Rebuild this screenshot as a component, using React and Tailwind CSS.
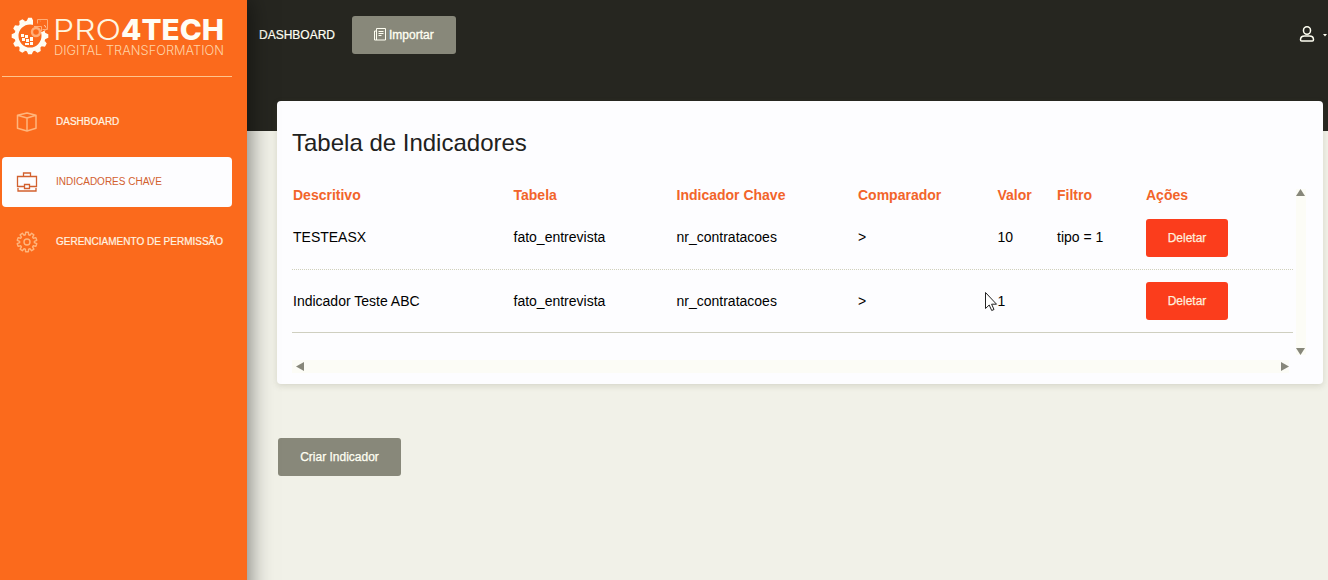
import React from "react";

function BoxIcon() {
  return (
    <svg width="22" height="20" viewBox="0 0 22 20" fill="none" stroke="currentColor" strokeWidth="1.5" strokeLinejoin="round">
      <path d="M1.500 3.200 11 .9l9 2.300v13L11 19l-9.500-2.800zM1.500 3.200 11 6l9-2.800M11 6v13" />
    </svg>
  );
}

function BriefcaseIcon() {
  return (
    <svg width="22" height="20" viewBox="0 0 22 20" fill="none" stroke="currentColor" strokeWidth="1.300">
      <path d="M7.500 4.500v-3.500h7v3.500M8.500 14.500h-7v-10h19v10h-7M8.500 12.500h5v4h-5zM2 16v3h18v-3" />
    </svg>
  );
}

const gearPath = (() => {
  const n = 10;
  const pts = [];
  for (let i = 0; i < n; i++) {
    const c = (i * 2 * Math.PI) / n;
    [[-0.22, 7.4], [-0.14, 9.9], [0.14, 9.9], [0.22, 7.4]].forEach(([o, r]) => {
      pts.push(`${(11 + r * Math.sin(c + o)).toFixed(2)} ${(11 - r * Math.cos(c + o)).toFixed(2)}`);
    });
  }
  return "M" + pts.join("L") + "z";
})();

function GearIcon() {
  return (
    <svg width="22" height="22" viewBox="0 0 22 22" fill="none" stroke="currentColor" strokeWidth="1.400" strokeLinejoin="round">
      <path d={gearPath} />
      <circle cx="11" cy="11" r="3" />
    </svg>
  );
}

const teeth = [0, 30, 60, 90, 120, 150, 180, 210, 240, 270, 300, 330];

function Brand() {
  return (
    <div className="h-[77px] w-[230px] border-b border-[#ffc48c] pl-[9px] pt-[14px]">
      <svg className="block" width="216" height="46" viewBox="0 0 216 46">
        <g fill="#fffdf4">
          {teeth.map((a) => (
            <path key={a} d="M15.700 7l1.500-3.300h3.600l1.500 3.300z" transform={`rotate(${a} 19 22)`} />
          ))}
        </g>
        <circle cx="19" cy="22" r="13.500" fill="none" stroke="#fffdf4" strokeWidth="4" />
        <path d="M22 19V6l5-2 9 11-5 3z" fill="#fb6a1c" />
        <path fill="#fffdf4" d="M10 20h3v3h-3zM14 21h3v3h-3zM11 24h3v3h-3zM15 25h3v3h-3zM19 23h3v4h-3zM14 29h4v2h-4zM19 28h3v3h-3z" />
        <g fill="none" stroke="#ffae78">
          <path d="M26.500 9.500v-4h10v10h-5" />
          <circle cx="25" cy="18" r="4" strokeWidth="2.400" />
          <path d="M23 12.500h7.500v5" />
        </g>
        <g fontFamily="Inter, 'Liberation Sans', sans-serif">
          <text x="42" y="26" fontSize="29" fontWeight="300" fill="#fff6e0" textLength="68" lengthAdjust="spacingAndGlyphs">PRO</text>
          <text x="110" y="26" fontSize="29" fontWeight="800" fill="#fffdf4" textLength="103" lengthAdjust="spacingAndGlyphs">4TECH</text>
          <text x="43" y="40.500" fontSize="12.500" fontWeight="300" fill="#ffd2a4" textLength="170" lengthAdjust="spacingAndGlyphs">DIGITAL TRANSFORMATION</text>
        </g>
      </svg>
    </div>
  );
}

function NavItem({ icon, label, active }) {
  return (
    <a
      className={
        "flex h-[50px] w-[230px] items-center rounded pl-[14px] text-[10px] leading-none " +
        (active ? "bg-[#fdfdff] text-[#d2602e]" : "text-[#fff4e2] [-webkit-text-stroke:0.2px_currentColor]")
      }
    >
      <span className={"flex w-10 shrink-0 " + (active ? "text-[#d2602e]" : "text-[#ffb57c]")}>{icon}</span>
      <span className="whitespace-nowrap">{label}</span>
    </a>
  );
}

const columns = "grid grid-cols-[220.500px_163px_181.500px_139.500px_59.500px_89px_1fr] pl-px";

const rows = [
  ["TESTEASX", "fato_entrevista", "nr_contratacoes", ">", "10", "tipo = 1"],
  ["Indicador Teste ABC", "fato_entrevista", "nr_contratacoes", ">", "1", ""],
];

function Arrow({ d, w, h }) {
  return (
    <svg className="block" width={w} height={h} viewBox={`0 0 ${w} ${h}`} fill="#87877a">
      <path d={d} />
    </svg>
  );
}

export default function App() {
  return (
    <div className="relative flex h-[580px] w-[1328px] overflow-hidden bg-[#f1f1e8] font-['Liberation_Sans',Arial,sans-serif]">
      <aside className="z-10 flex h-[640px] w-[247px] shrink-0 flex-col bg-[#fb6a1c] pl-[2px] shadow-[2px_0_22px_0_rgba(0,0,0,0.5)]">
        <Brand />
        <nav className="mt-5 flex flex-col gap-[10px]">
          <NavItem icon={<BoxIcon />} label="DASHBOARD" />
          <NavItem icon={<BriefcaseIcon />} label="INDICADORES CHAVE" active />
          <NavItem icon={<GearIcon />} label="GERENCIAMENTO DE PERMISSÃO" />
        </nav>
      </aside>

      <main className="flex min-w-0 flex-1 flex-col">
        <header className="flex h-[131px] shrink-0 items-start bg-[#262620] pl-3 pt-4 text-xs text-[#fffff2]">
          <span className="flex h-[38px] w-[93px] items-center [-webkit-text-stroke:0.2px_currentColor]">DASHBOARD</span>
          <button className="flex h-[38px] w-[104px] items-center rounded-[3px] bg-[#88887a] pl-[22px]">
            <svg className="-mt-[2px]" width="12" height="13" viewBox="0 0 12 13" fill="none" stroke="currentColor">
              <path d="M2.500.500h9v11.500h-11v-9h2zM2.500 3v9M4.500 3.500h5M4.500 5.500h5M4.500 7.500h3" />
            </svg>
            <span className="ml-[3px] [-webkit-text-stroke:0.3px_currentColor]">Importar</span>
          </button>
          <div className="ml-auto flex h-[38px] items-center">
            <svg className="-mt-[2px] mr-[7px]" width="16" height="18" viewBox="0 0 16 18" fill="none" stroke="currentColor" strokeWidth="1.500">
              <rect x="4.500" y="1.800" width="7" height="7.400" rx="3.400" />
              <path d="M5.500 11h5c2.500 0 4 1.600 4 3.700 0 .8-.4 1.300-1.200 1.300H2.700c-.8 0-1.200-.5-1.200-1.300 0-2.100 1.500-3.700 4-3.700z" />
            </svg>
            <svg width="6" height="4" viewBox="0 0 6 4" fill="currentColor">
              <path d="M1 1h4L3 3.500z" />
            </svg>
          </div>
        </header>

        <section className="ml-[30px] -mt-[30px] flex h-[283px] w-[1046px] shrink-0 flex-col rounded-[4px] bg-[#fdfdff] pl-[15px] text-sm text-black shadow-[0_2px_6px_rgba(90,90,60,0.18)]">
          <h1 className="mt-[27px] h-[30px] whitespace-nowrap text-2xl leading-[30px] text-[#212120]">Tabela de Indicadores</h1>
          <div className="mt-[22px] flex h-[180px]">
            <div className="w-[1001px]">
              <div className={columns + " h-[30px] items-center font-bold text-[#f2642a]"}>
                <span>Descritivo</span>
                <span>Tabela</span>
                <span>Indicador Chave</span>
                <span>Comparador</span>
                <span>Valor</span>
                <span>Filtro</span>
                <span>Ações</span>
              </div>
              {rows.map((r, i) => (
                <div
                  key={r[0]}
                  className={
                    columns +
                    " items-start border-b " +
                    (i === 0 ? "h-[60px] border-dotted border-[#d0d0bc] pt-[9px]" : "h-[63px] border-[#cfcfc0] pt-[12px]")
                  }
                >
                  {r.map((c, j) => (
                    <span key={j} className={"whitespace-nowrap leading-[38px] " + (i === 0 ? "-mt-px" : "")}>{c}</span>
                  ))}
                  <button className="h-[38px] w-[82px] rounded-[3px] bg-[#fb3d1c] text-xs text-[#ffeedd] [-webkit-text-stroke:0.25px_currentColor]">
                    Deletar
                  </button>
                </div>
              ))}
            </div>
            <div className="ml-[3px] mt-[9px] flex h-[166px] w-[10px] flex-col justify-between bg-[#fcfcf6]">
              <Arrow w={9} h={7} d="M4.500 0 9 7H0z" />
              <Arrow w={9} h={7} d="M4.500 7 9 0H0z" />
            </div>
          </div>
          <div className="flex h-[13px] w-[997px] items-center justify-between bg-[#fcfcf6] pl-1">
            <Arrow w={8} h={9} d="M0 4.500 8 0v9z" />
            <Arrow w={8} h={9} d="M8 4.500 0 0v9z" />
          </div>
        </section>

        <button className="ml-[31px] mt-[54px] h-[38px] w-[123px] shrink-0 rounded-[3px] bg-[#88887a] text-xs text-[#fffff2] [-webkit-text-stroke:0.25px_currentColor]">
          Criar Indicador
        </button>
      </main>

      <svg className="absolute left-[984px] top-[291px] z-20" width="14" height="21" viewBox="0 0 14 21" fill="#fff" stroke="#222" strokeWidth="1">
        <path d="M1.500 1.500v16l3.700-3.500 2.500 5.500 2.300-1-2.400-5.300h4.900z" />
      </svg>
    </div>
  );
}
